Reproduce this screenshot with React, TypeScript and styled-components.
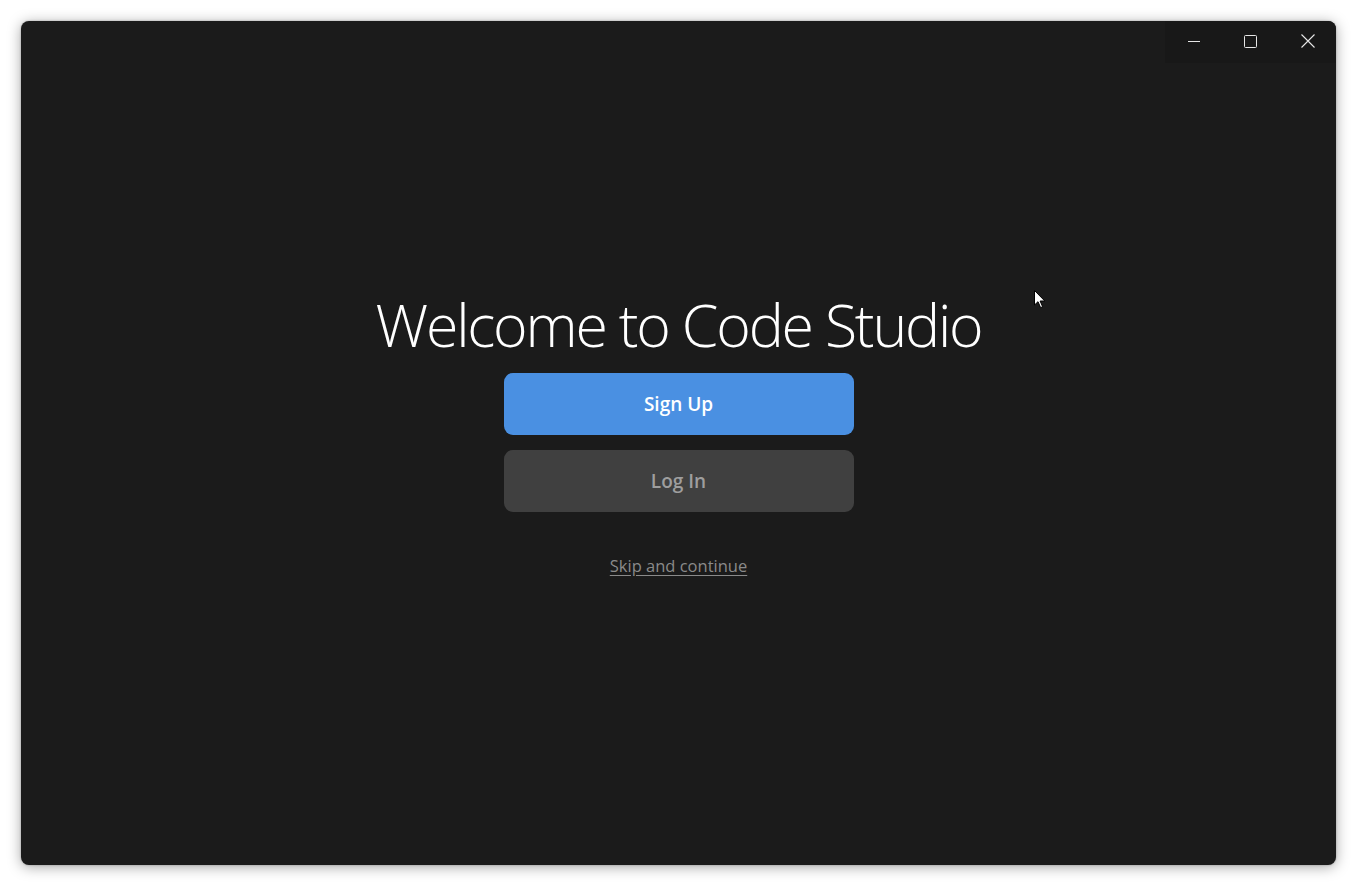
import React from "react";
import styled, { createGlobalStyle } from "styled-components";

const Global = createGlobalStyle`
  html, body { margin: 0; padding: 0; background: #ffffff; }
  body { font-family: "Open Sans", "Noto Sans", sans-serif; }
  * { box-sizing: border-box; }
`;

const Page = styled.div`
  width: 1357px;
  height: 886px;
  padding: 21px 21px 21px 21px;
  display: flex;
`;

const Window = styled.div`
  position: relative;
  flex: 1;
  background: #1b1b1b;
  border-radius: 8px;
  box-shadow: 0 2px 14px rgba(0, 0, 0, 0.35), 0 0 2px rgba(0, 0, 0, 0.3);
  display: flex;
  flex-direction: column;
  overflow: hidden;
`;

const TitleBar = styled.div`
  height: 42px;
  display: flex;
  justify-content: flex-end;
`;

const Controls = styled.div`
  display: flex;
  background: #181818;
`;

const ControlButton = styled.button`
  width: 57px;
  height: 42px;
  border: none;
  background: transparent;
  color: #e6e6e6;
  display: flex;
  align-items: center;
  justify-content: center;
  padding: 0 0 2px 0;
`;

const Main = styled.div`
  flex: 1;
  display: flex;
  flex-direction: column;
  align-items: center;
  padding-top: 224px;
`;

const Title = styled.h1`
  margin: 0;
  font-family: "Open Sans", "Noto Sans", sans-serif;
  font-weight: 300;
  font-size: 59px;
  line-height: 74px;
  letter-spacing: -2.2px;
  color: #ffffff;
`;

const Button = styled.button<{ $primary?: boolean }>`
  width: 350px;
  height: 62px;
  border: none;
  border-radius: 9px;
  background: ${(p) => (p.$primary ? "#4a90e2" : "#404040")};
  color: ${(p) => (p.$primary ? "#ffffff" : "#9e9e9e")};
  font-family: "Open Sans", "Noto Sans", sans-serif;
  font-weight: 600;
  font-size: 19px;
  display: flex;
  align-items: center;
  justify-content: center;
`;

const Buttons = styled.div`
  display: flex;
  flex-direction: column;
  gap: 15px;
  margin-top: 12px;
`;

const SkipLink = styled.a`
  margin-top: 42px;
  color: #8a8a8a;
  font-family: "Open Sans", "Noto Sans", sans-serif;
  font-size: 16.5px;
  text-decoration: underline;
  text-underline-offset: 3px;
  cursor: pointer;
`;

const Cursor = styled.svg`
  position: absolute;
  left: 1013px;
  top: 269px;
`;

export default function App() {
  return (
    <>
      <Global />
      <Page>
        <Window>
          <TitleBar>
            <Controls>
              <ControlButton aria-label="Minimize">
                <svg width="12" height="12" viewBox="0 0 12 12">
                  <line x1="0" y1="6.5" x2="12" y2="6.5" stroke="currentColor" strokeWidth="1" />
                </svg>
              </ControlButton>
              <ControlButton aria-label="Maximize">
                <svg width="13" height="13" viewBox="0 0 13 13">
                  <rect x="0.5" y="0.5" width="12" height="12" rx="1" fill="none" stroke="currentColor" strokeWidth="1" />
                </svg>
              </ControlButton>
              <ControlButton aria-label="Close">
                <svg width="14" height="14" viewBox="0 0 14 14">
                  <path d="M0.5 0.5 L13.5 13.5 M13.5 0.5 L0.5 13.5" stroke="currentColor" strokeWidth="1.1" />
                </svg>
              </ControlButton>
            </Controls>
          </TitleBar>
          <Main>
            <Title>Welcome to Code Studio</Title>
            <Buttons>
              <Button $primary>Sign Up</Button>
              <Button>Log In</Button>
            </Buttons>
            <SkipLink>Skip and continue</SkipLink>
          </Main>
          <Cursor width="12" height="19" viewBox="0 0 12 19">
            <path d="M0.5 0.5 L0.5 15 L4 11.7 L6.6 17.6 L8.6 16.7 L6.1 11 L10.8 11 Z" fill="#ffffff" stroke="#000000" strokeWidth="1" />
          </Cursor>
        </Window>
      </Page>
    </>
  );
}
